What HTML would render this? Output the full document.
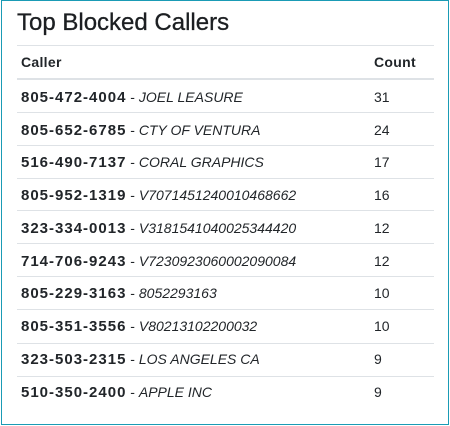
<!DOCTYPE html>
<html><head><style>
html,body{margin:0;padding:0;background:#fff;}
body{width:450px;height:426px;position:relative;font-family:"Liberation Sans",sans-serif;color:#212529;}
.box{position:absolute;left:1px;top:0;width:446px;height:423px;border:1px solid #1a9bb5;}
h1{position:absolute;left:17px;top:8px;margin:0;font-size:24px;font-weight:normal;line-height:30px;color:#1c1f22;-webkit-text-stroke:0.3px #1c1f22;}
.hr{position:absolute;left:17px;width:417px;height:1px;background:#dee2e6;}
.row{position:absolute;left:21px;width:417px;font-size:14px;line-height:20px;}
.row .c{position:absolute;left:353px;top:0;}
.row b{font-weight:bold;font-size:15px;letter-spacing:1px;}
</style></head><body>
<div class="box"></div>
<h1>Top Blocked Callers</h1>
<div class="hr" style="top:45px"></div>
<div class="row" style="top:52px;font-weight:bold;letter-spacing:0.3px"><span>Caller</span><span class="c">Count</span></div>
<div class="hr" style="top:78px;height:2px"></div>

<div class="row" style="top:87px"><b>805-472-4004</b> - <i>JOEL LEASURE</i><span class="c">31</span></div>
<div class="hr" style="top:112px"></div>
<div class="row" style="top:120px"><b>805-652-6785</b> - <i>CTY OF VENTURA</i><span class="c">24</span></div>
<div class="hr" style="top:145px"></div>
<div class="row" style="top:152px"><b>516-490-7137</b> - <i>CORAL GRAPHICS</i><span class="c">17</span></div>
<div class="hr" style="top:178px"></div>
<div class="row" style="top:185px"><b>805-952-1319</b> - <i>V7071451240010468662</i><span class="c">16</span></div>
<div class="hr" style="top:210px"></div>
<div class="row" style="top:218px"><b>323-334-0013</b> - <i>V3181541040025344420</i><span class="c">12</span></div>
<div class="hr" style="top:243px"></div>
<div class="row" style="top:251px"><b>714-706-9243</b> - <i>V7230923060002090084</i><span class="c">12</span></div>
<div class="hr" style="top:276px"></div>
<div class="row" style="top:283px"><b>805-229-3163</b> - <i>8052293163</i><span class="c">10</span></div>
<div class="hr" style="top:309px"></div>
<div class="row" style="top:316px"><b>805-351-3556</b> - <i>V80213102200032</i><span class="c">10</span></div>
<div class="hr" style="top:343px"></div>
<div class="row" style="top:349px"><b>323-503-2315</b> - <i>LOS ANGELES CA</i><span class="c">9</span></div>
<div class="hr" style="top:376px"></div>
<div class="row" style="top:382px"><b>510-350-2400</b> - <i>APPLE INC</i><span class="c">9</span></div>
</body></html>
